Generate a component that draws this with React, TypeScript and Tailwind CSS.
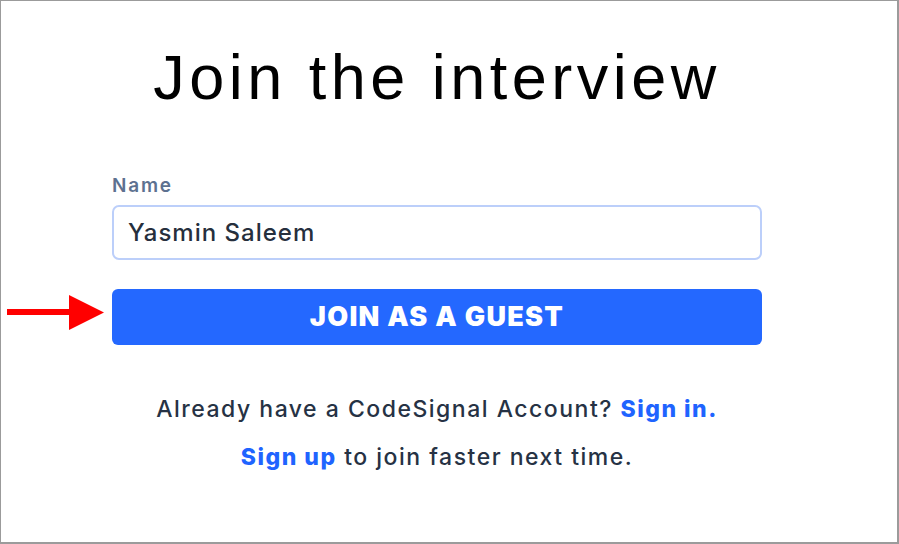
export default function App() {
  return (
    <div className="relative h-[544px] w-[899px] overflow-hidden bg-white">
      <div className="h-[544px] w-[899px] border-t border-l border-r-2 border-b-2 border-[#9b9b9b] bg-white">
        <div className="ml-[111px] flex w-[650px] flex-col">
          <h1
            className="mt-[38px] text-center text-[63px] leading-[76px] tracking-[4.5px] text-black"
            style={{ fontFamily: '"Liberation Sans", Arial, sans-serif' }}
          >
            Join the interview
          </h1>

          <div className="mt-[59px] flex flex-col" style={{ fontFamily: 'Inter, "Open Sans", sans-serif' }}>
            <label className="text-[19px] font-semibold leading-[24px] tracking-[1.8px] text-[#5d7190]">Name</label>
            <input
              className="mt-[7px] h-[55px] w-[650px] rounded-[7px] border-2 border-[#bccffa] px-[14px] text-[24px] font-medium tracking-[1px] text-[#262f3d] outline-none"
              defaultValue="Yasmin Saleem"
            />
            <button className="mt-[29px] h-[56px] w-[650px] rounded-[6px] bg-[#2468ff] text-[27px] font-black uppercase tracking-[1.3px] text-white">
              Join as a guest
            </button>

            <p className="mt-[50px] text-center text-[23px] font-medium leading-[28px] tracking-[1.5px] text-[#263244]">
              Already have a CodeSignal Account?{' '}
              <a className="font-extrabold text-[#1f64ff]">Sign in.</a>
            </p>
            <p className="mt-[20px] text-center text-[23px] font-medium leading-[28px] tracking-[1.5px] text-[#263244]">
              <a className="font-extrabold text-[#1f64ff]">Sign up</a> to join faster next time.
            </p>
          </div>
        </div>
      </div>

      <svg className="absolute left-[7px] top-[295px]" width="97" height="35" viewBox="0 0 97 35">
        <rect x="0" y="14" width="64" height="6" fill="#ff0000" />
        <polygon points="62,0 97,17.5 62,35" fill="#ff0000" />
      </svg>
    </div>
  );
}
